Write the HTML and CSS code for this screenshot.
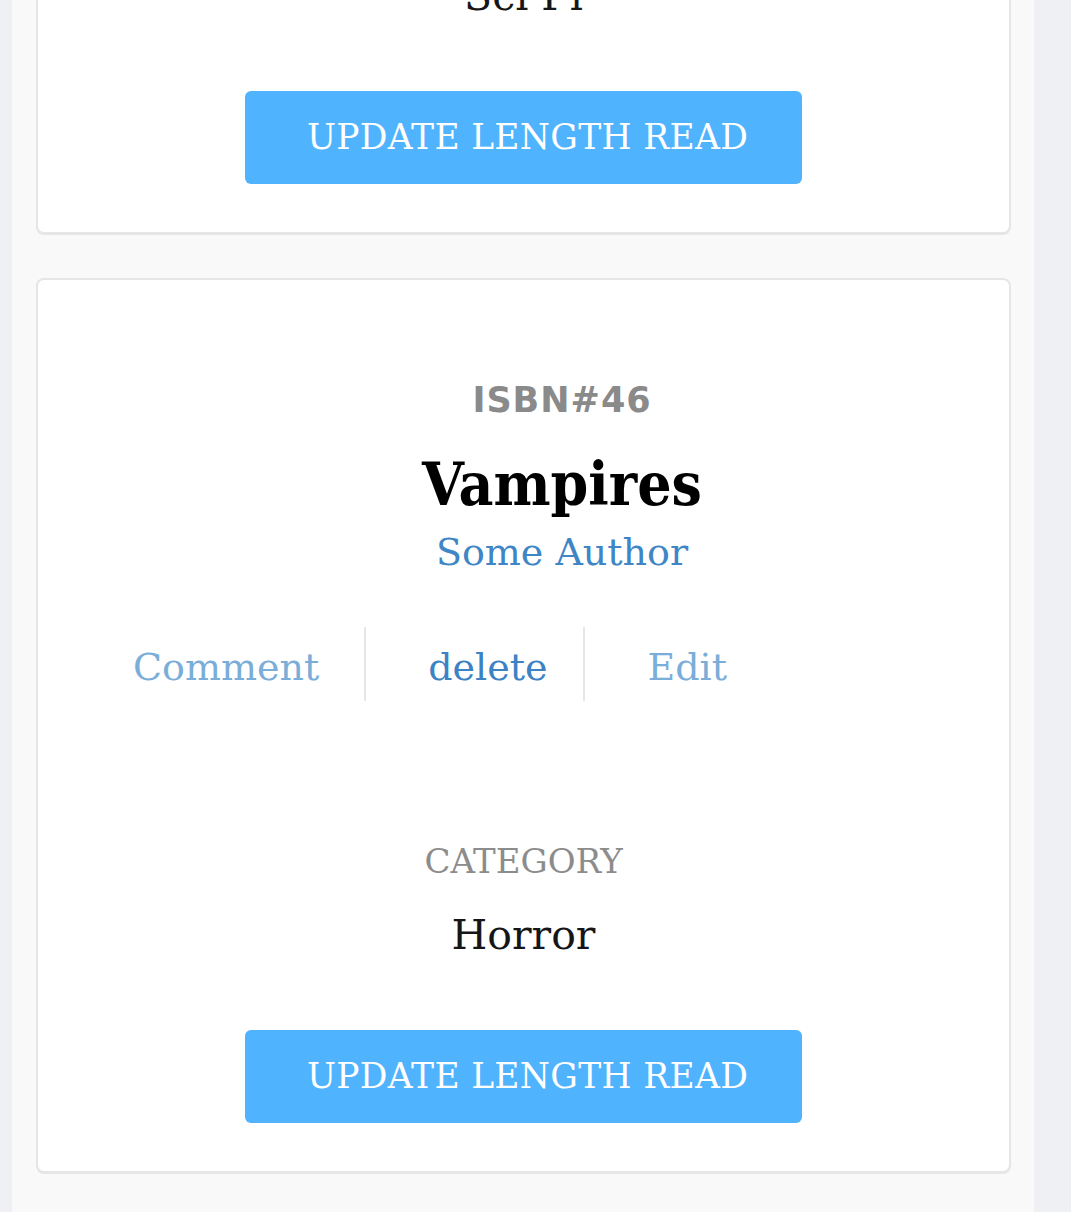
FILE: index.html
```html
<!DOCTYPE html>
<html lang="en">
<head>
<meta charset="utf-8">
<title>Books</title>
<link rel="stylesheet" href="styles.css">
</head>
<body>
  <main class="shelf">
    <section class="card card--partial">
      <div class="category">
        <div class="category-value">Sci Fi</div>
      </div>
      <button class="btn-update" type="button">UPDATE LENGTH READ</button>
    </section>

    <section class="card">
      <header class="book-head">
        <div class="isbn">ISBN#46</div>
        <h2 class="title">Vampires</h2>
        <div class="author">Some Author</div>
      </header>
      <nav class="actions">
        <a class="action action--light" href="#">Comment</a>
        <a class="action action--dark" href="#">delete</a>
        <a class="action action--light" href="#">Edit</a>
      </nav>
      <div class="category">
        <div class="category-label">CATEGORY</div>
        <div class="category-value">Horror</div>
      </div>
      <button class="btn-update" type="button">UPDATE LENGTH READ</button>
    </section>
  </main>
</body>
</html>
```

FILE: styles.css
```css
html, body {
  margin: 0;
  padding: 0;
}

body {
  background: #eef0f4;
  font-family: "DejaVu Serif", serif;
}

.shelf {
  margin-left: 12px;
  width: 1022px;
  min-height: 100vh;
  background: #f9f9f9;
  padding: 0 23px 40px 24px;
  box-sizing: border-box;
  overflow: hidden;
}

.card {
  background: #fff;
  border: 2px solid #e6e6e6;
  border-radius: 8px;
  box-shadow: 0 1px 0 #e6e6e6;
  padding: 103px 0 48px;
  margin-top: 44px;
  display: flex;
  flex-direction: column;
  align-items: stretch;
}

.card--partial {
  margin-top: -26px;
  padding-top: 0;
}

.book-head {
  padding-left: 77px;
  text-align: center;
}

.isbn {
  font-family: "DejaVu Sans", sans-serif;
  font-weight: 700;
  font-size: 35px;
  line-height: 34px;
  letter-spacing: 1px;
  color: #8a8a8a;
}

.title {
  margin: 37px 0 0;
  font-family: "DejaVu Serif", serif;
  font-weight: 700;
  font-stretch: condensed;
  font-size: 60px;
  line-height: 60px;
  color: #000;
}

.author {
  margin-top: 19px;
  font-size: 38px;
  line-height: 38px;
  color: #3f86c6;
}

.actions {
  display: flex;
  margin-top: 56px;
  padding-left: 95px;
}

.action {
  display: block;
  height: 74px;
  box-sizing: border-box;
  padding: 21px 45px 0 62px;
  font-size: 38px;
  line-height: 38px;
  text-decoration: none;
  border-left: 2px solid #e6e6e6;
}

.action:first-child {
  padding-left: 0;
  border-left: none;
}

.action--light {
  color: #7aaed9;
}

.action--dark {
  color: #3d83c4;
  padding-right: 36px;
}

.category {
  text-align: center;
  margin-top: 143px;
}

.card--partial .category {
  margin-top: 0;
}

.category-label {
  font-size: 34px;
  line-height: 34px;
  color: #8c8c8c;
}

.category-value {
  margin-top: 37px;
  font-size: 41px;
  line-height: 41px;
  color: #161616;
}

.card--partial .category-value {
  margin-top: 0;
}

.btn-update {
  align-self: center;
  margin-top: 74px;
  width: 557px;
  height: 93px;
  border: none;
  border-radius: 6px;
  background: #4fb3fe;
  color: #fff;
  font-family: "DejaVu Serif", serif;
  font-size: 34.5px;
  letter-spacing: 0.3px;
  line-height: 1;
  padding: 0 0 0 8px;
  cursor: pointer;
}
```
